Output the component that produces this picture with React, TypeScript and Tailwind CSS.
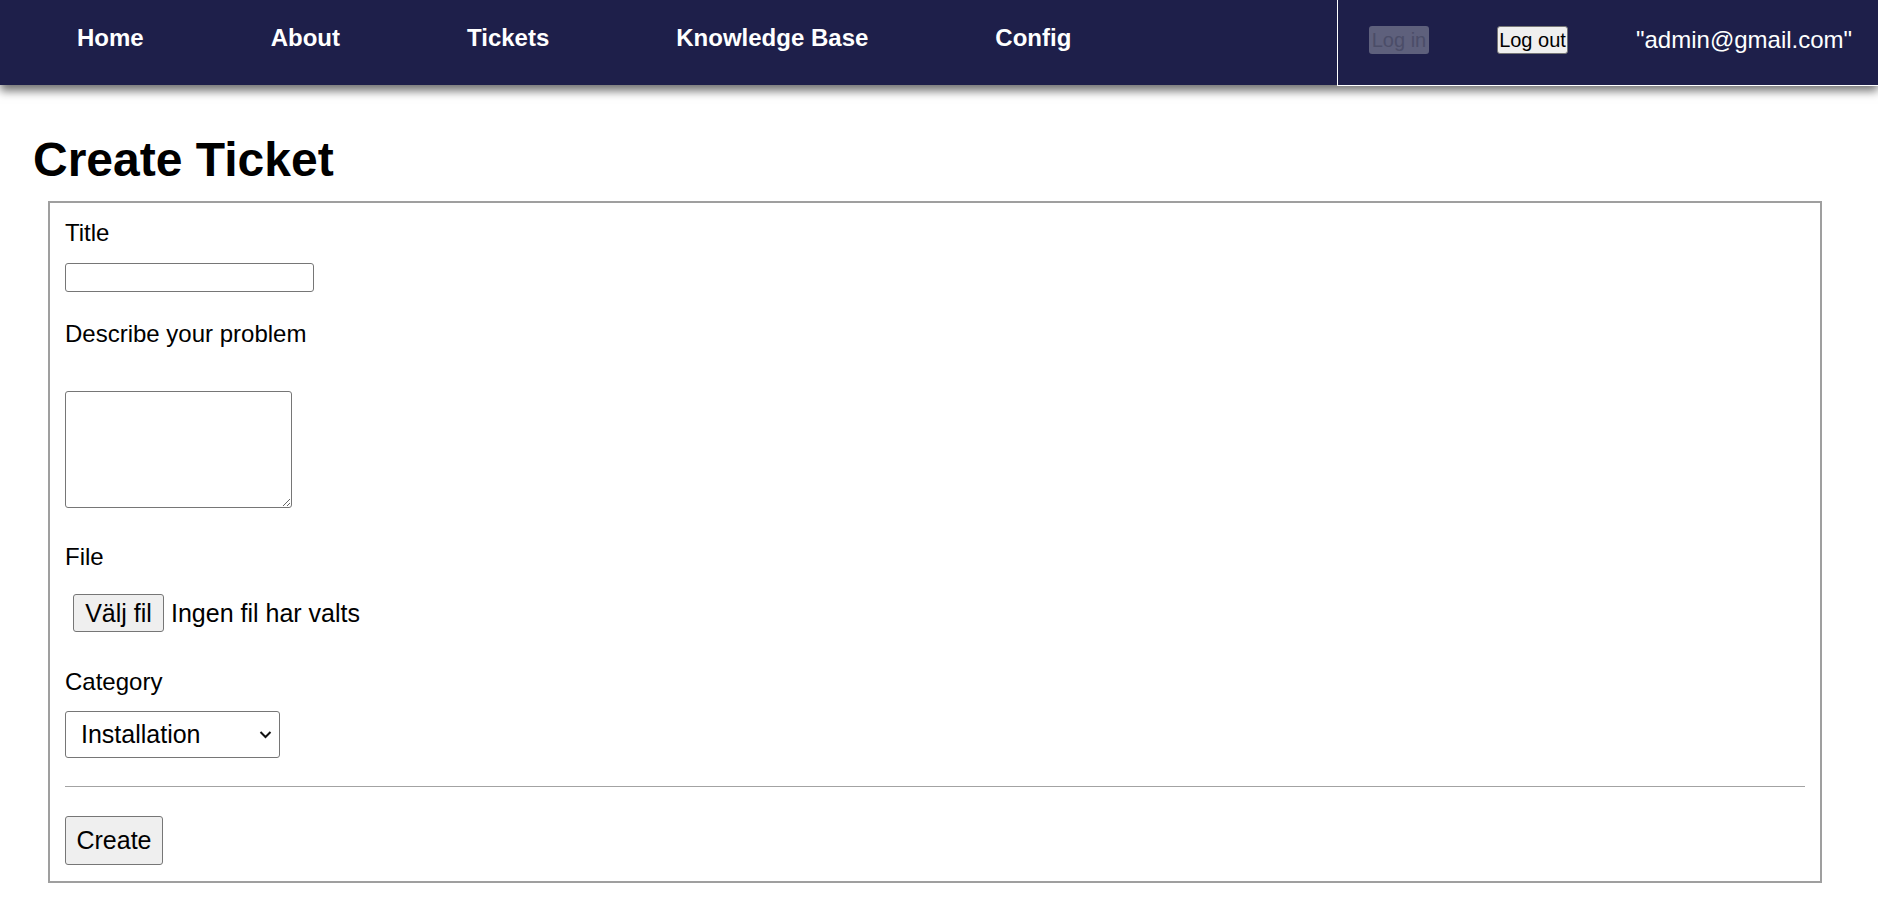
import { useState } from 'react';

const links = ['Home', 'About', 'Tickets', 'Knowledge Base', 'Config'];

const NavBar = () => {
	return (
		<nav className="relative z-10 flex h-[85px] w-full bg-[#1e1f4a] shadow-[0_6px_9px_rgba(0,0,0,0.55)]">
			<ul className="flex flex-1 items-center gap-[127px] pl-[77px] pb-[9px]">
				{links.map((l) => (
					<li key={l}>
						<a href="#" className="text-[24px] leading-[28px] font-bold text-white">
							{l}
						</a>
					</li>
				))}
			</ul>
			<div className="flex h-[86px] w-[541px] items-center border-l border-b border-white pl-[31px] pb-[5px]">
				<button
					disabled
					className="flex h-[28px] w-[60px] items-center justify-center rounded-[3px] bg-[#5e607c] text-[20px] leading-none text-[#4b4d68]"
				>
					Log in
				</button>
				<button className="ml-[68px] flex h-[28px] w-[71px] items-center justify-center rounded-[3px] border border-[#767676] bg-[#efefef] text-[20px] leading-none text-black">
					Log out
				</button>
				<span className="ml-[68px] text-[24px] leading-[28px] text-white">"admin@gmail.com"</span>
			</div>
		</nav>
	);
};

const CreateTicket = () => {
	const [title, setTitle] = useState('');
	const [description, setDescription] = useState('');
	const [category, setCategory] = useState('Installation');

	return (
		<div className="pl-[33px] pr-[56px]">
			<h1 className="mt-[47px] text-[48px] leading-[55px] font-bold text-black">Create Ticket</h1>
			<form
				className="mt-[14px] ml-[15px] border-2 border-[#9f9f9f] px-[15px] pt-[16px] pb-[16px]"
				onSubmit={(e) => {
					e.preventDefault();
				}}
			>
				<label htmlFor="title" className="block text-[24px] leading-[28px] text-black">
					Title
				</label>
				<input
					id="title"
					type="text"
					className="mt-[16px] block h-[29px] w-[249px] rounded-[3px] border border-[#767676] bg-white px-1 focus:outline-none"
					value={title}
					onChange={(e) => setTitle(e.target.value)}
				/>

				<label htmlFor="description" className="mt-[28px] block text-[24px] leading-[28px] text-black">
					Describe your problem
				</label>
				<textarea
					id="description"
					className="mt-[43px] block h-[117px] w-[227px] rounded-[3px] border border-[#767676] bg-white focus:outline-none"
					value={description}
					onChange={(e) => setDescription(e.target.value)}
				/>

				<label htmlFor="file" className="mt-[35px] block text-[24px] leading-[28px] text-black">
					File
				</label>
				<div className="mt-[23px] flex items-center">
					<button
						type="button"
						className="ml-[8px] flex h-[38px] w-[91px] items-center justify-center rounded-[3px] border border-[#767676] bg-[#efefef] text-[25px] leading-none text-black"
					>
						Välj fil
					</button>
					<span className="ml-[7px] text-[25px] leading-none text-black">Ingen fil har valts</span>
				</div>

				<label htmlFor="category" className="mt-[36px] block text-[24px] leading-[28px] text-black">
					Category
				</label>
				<div className="relative mt-[15px] h-[47px] w-[215px]">
					<select
						id="category"
						className="h-full w-full appearance-none rounded-[3px] border border-[#767676] bg-white pl-[15px] text-[25px] text-black focus:outline-none"
						value={category}
						onChange={(e) => setCategory(e.target.value)}
					>
						<option>Installation</option>
						<option>Software</option>
						<option>Hardware</option>
						<option>Other</option>
					</select>
					<svg
						className="pointer-events-none absolute top-[19px] right-[8px]"
						width="13"
						height="9"
						viewBox="0 0 13 9"
						fill="none"
					>
						<path d="M1.5 2 L6.5 7 L11.5 2" stroke="#111" strokeWidth="2" />
					</svg>
				</div>

				<hr className="mt-[28px] border-0 border-t border-[#a3a3a3]" />

				<button
					type="submit"
					className="mt-[29px] flex h-[49px] w-[98px] items-center justify-center rounded-[3px] border border-[#767676] bg-[#efefef] text-[25px] leading-none text-black"
				>
					Create
				</button>
			</form>
		</div>
	);
};

export default function App() {
	return (
		<div className="min-h-screen bg-white font-['Liberation_Sans',Arial,sans-serif]">
			<NavBar />
			<CreateTicket />
		</div>
	);
}
